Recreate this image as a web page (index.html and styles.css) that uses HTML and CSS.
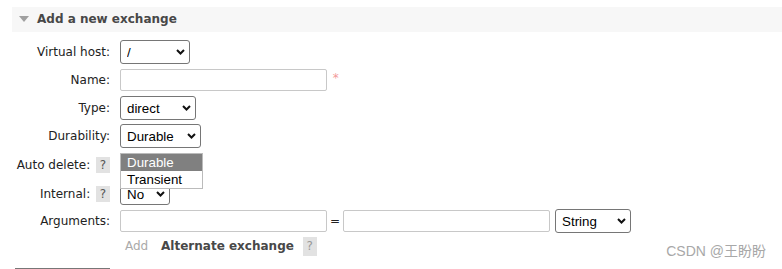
FILE: index.html
```html
<!DOCTYPE html>
<html lang="en">
<head>
    <meta charset="UTF-8">
    <title>Add a new exchange</title>
    <link rel="stylesheet" href="styles.css">
</head>
<body>
    <div class="page">
        <h2 class="section-title"><span class="arrow"></span>Add a new exchange</h2>

        <table class="form">
            <tr>
                <th>Virtual host:</th>
                <td>
                    <span class="select w-vhost"><select><option>/</option></select><svg class="chev" width="9" height="6" viewBox="0 0 9 6"><path d="M1 1 L4.5 4.5 L8 1" /></svg></span>
                </td>
            </tr>
            <tr>
                <th>Name:</th>
                <td><input type="text" class="text"> <span class="mand">*</span></td>
            </tr>
            <tr>
                <th>Type:</th>
                <td>
                    <span class="select w-type"><select><option>direct</option></select><svg class="chev" width="9" height="6" viewBox="0 0 9 6"><path d="M1 1 L4.5 4.5 L8 1" /></svg></span>
                </td>
            </tr>
            <tr>
                <th>Durability:</th>
                <td>
                    <span class="select w-dur"><select><option>Durable</option></select><svg class="chev" width="9" height="6" viewBox="0 0 9 6"><path d="M1 1 L4.5 4.5 L8 1" /></svg></span>
                </td>
            </tr>
            <tr class="tall">
                <th>Auto delete: <span class="help">?</span></th>
                <td>
                    <span class="select w-no"><select><option>No</option></select><svg class="chev" width="9" height="6" viewBox="0 0 9 6"><path d="M1 1 L4.5 4.5 L8 1" /></svg></span>
                </td>
            </tr>
            <tr>
                <th>Internal: <span class="help">?</span></th>
                <td>
                    <span class="select w-no low"><select><option>No</option></select><svg class="chev" width="9" height="6" viewBox="0 0 9 6"><path d="M1 1 L4.5 4.5 L8 1" /></svg></span>
                </td>
            </tr>
            <tr class="args">
                <th>Arguments:</th>
                <td>
                    <div class="arg-row">
                        <input type="text" class="text">
                        <span class="eq">=</span>
                        <input type="text" class="text">
                        <span class="select w-string"><select><option>String</option></select><svg class="chev" width="9" height="6" viewBox="0 0 9 6"><path d="M1 1 L4.5 4.5 L8 1" /></svg></span>
                    </div>
                </td>
            </tr>
            <tr class="links">
                <th></th>
                <td>
                    <span class="add">Add</span>
                    <span class="alt">Alternate exchange</span>
                    <span class="help big">?</span>
                </td>
            </tr>
        </table>

        <div class="submit-edge"></div>

        <ul class="dropdown">
            <li class="active">Durable</li>
            <li>Transient</li>
        </ul>
    </div>

    <div class="watermark">CSDN @王盼盼</div>
</body>
</html>
```

FILE: styles.css
```css
body {
    margin: 0;
    font-family: "DejaVu Sans", Verdana, sans-serif;
    font-size: 12px;
    color: #222;
    background-color: #fff;
    overflow: hidden;
}
.page {
    position: relative;
    padding: 7px 0 0 12px;
}
.section-title {
    margin: 0;
    height: 25px;
    line-height: 25px;
    padding-left: 7px;
    font-size: 12px;
    font-weight: bold;
    color: #484848;
    background-color: #f7f7f7;
}
.arrow {
    display: inline-block;
    width: 0;
    height: 0;
    border-left: 5px solid transparent;
    border-right: 5px solid transparent;
    border-top: 6px solid #a0a0a0;
    margin-right: 8px;
    vertical-align: 1px;
}
.form {
    border-collapse: collapse;
    margin-top: 6px;
}
.form th,
.form td {
    height: 28px;
    padding: 0;
    vertical-align: middle;
}
.form th {
    width: 98px;
    text-align: right;
    font-weight: normal;
    white-space: nowrap;
}
.form td {
    padding-left: 10px;
}
.form tr.tall th,
.form tr.tall td {
    height: 30px;
}
.form tr.args th,
.form tr.args td {
    height: 26px;
}
.form tr.links th,
.form tr.links td {
    height: 24px;
}
.select {
    position: relative;
    display: inline-block;
    vertical-align: middle;
}
.select select {
    appearance: none;
    -webkit-appearance: none;
    display: block;
    width: 100%;
    height: 24px;
    margin: 0;
    padding: 0 0 0 6px;
    border: 1px solid #767676;
    border-radius: 3px;
    background-color: #fff;
    color: #000;
    font-family: "Liberation Sans", Arial, sans-serif;
    font-size: 13.33px;
}
.select .chev {
    position: absolute;
    right: 5px;
    top: 9px;
    pointer-events: none;
}
.chev path {
    fill: none;
    stroke: #111;
    stroke-width: 2;
}
.w-vhost { width: 70px; }
.w-type { width: 76px; }
.w-dur { width: 81px; }
.w-no { width: 50px; }
.w-string { width: 76px; }
.low select { height: 22px; }
.low .chev { top: 8px; }
input.text {
    width: 207px;
    height: 22px;
    box-sizing: border-box;
    margin: 0;
    border: 1px solid #c8c8c8;
    border-radius: 2px;
    vertical-align: middle;
}
.mand {
    color: #f39a9a;
    margin-left: 2px;
    vertical-align: 2px;
}
.arg-row {
    display: flex;
    align-items: center;
}
.eq {
    margin: 0 3px 0 3px;
}
.arg-row .select {
    margin-left: 5px;
}
.help {
    display: inline-block;
    width: 14px;
    height: 16px;
    line-height: 16px;
    margin-left: 2px;
    text-align: center;
    color: #555;
    background-color: #e2e2e2;
    vertical-align: middle;
}
.help.big {
    height: 19px;
    line-height: 19px;
    color: #999;
    margin-left: 5px;
}
.add {
    color: #aaa;
    margin-left: 5px;
    margin-right: 9px;
}
.alt {
    font-weight: bold;
    color: #484848;
}
.submit-edge {
    width: 95px;
    margin: 10px 0 0 3px;
    border-top: 1px solid #777;
}
.dropdown {
    position: absolute;
    left: 120px;
    top: 153px;
    width: 81px;
    margin: 0;
    padding: 0;
    list-style: none;
    background-color: #fff;
    border: 1px solid #bbb;
    font-family: "Liberation Sans", Arial, sans-serif;
    font-size: 13.33px;
    color: #000;
}
.dropdown li {
    height: 17px;
    line-height: 17px;
    padding-left: 6px;
}
.dropdown li.active {
    background-color: #808080;
    color: #fff;
}
.watermark {
    position: absolute;
    right: 16px;
    top: 240px;
    font-family: "Liberation Sans", "Noto Sans CJK SC", sans-serif;
    font-size: 14px;
    color: #a8a8a8;
}
```
